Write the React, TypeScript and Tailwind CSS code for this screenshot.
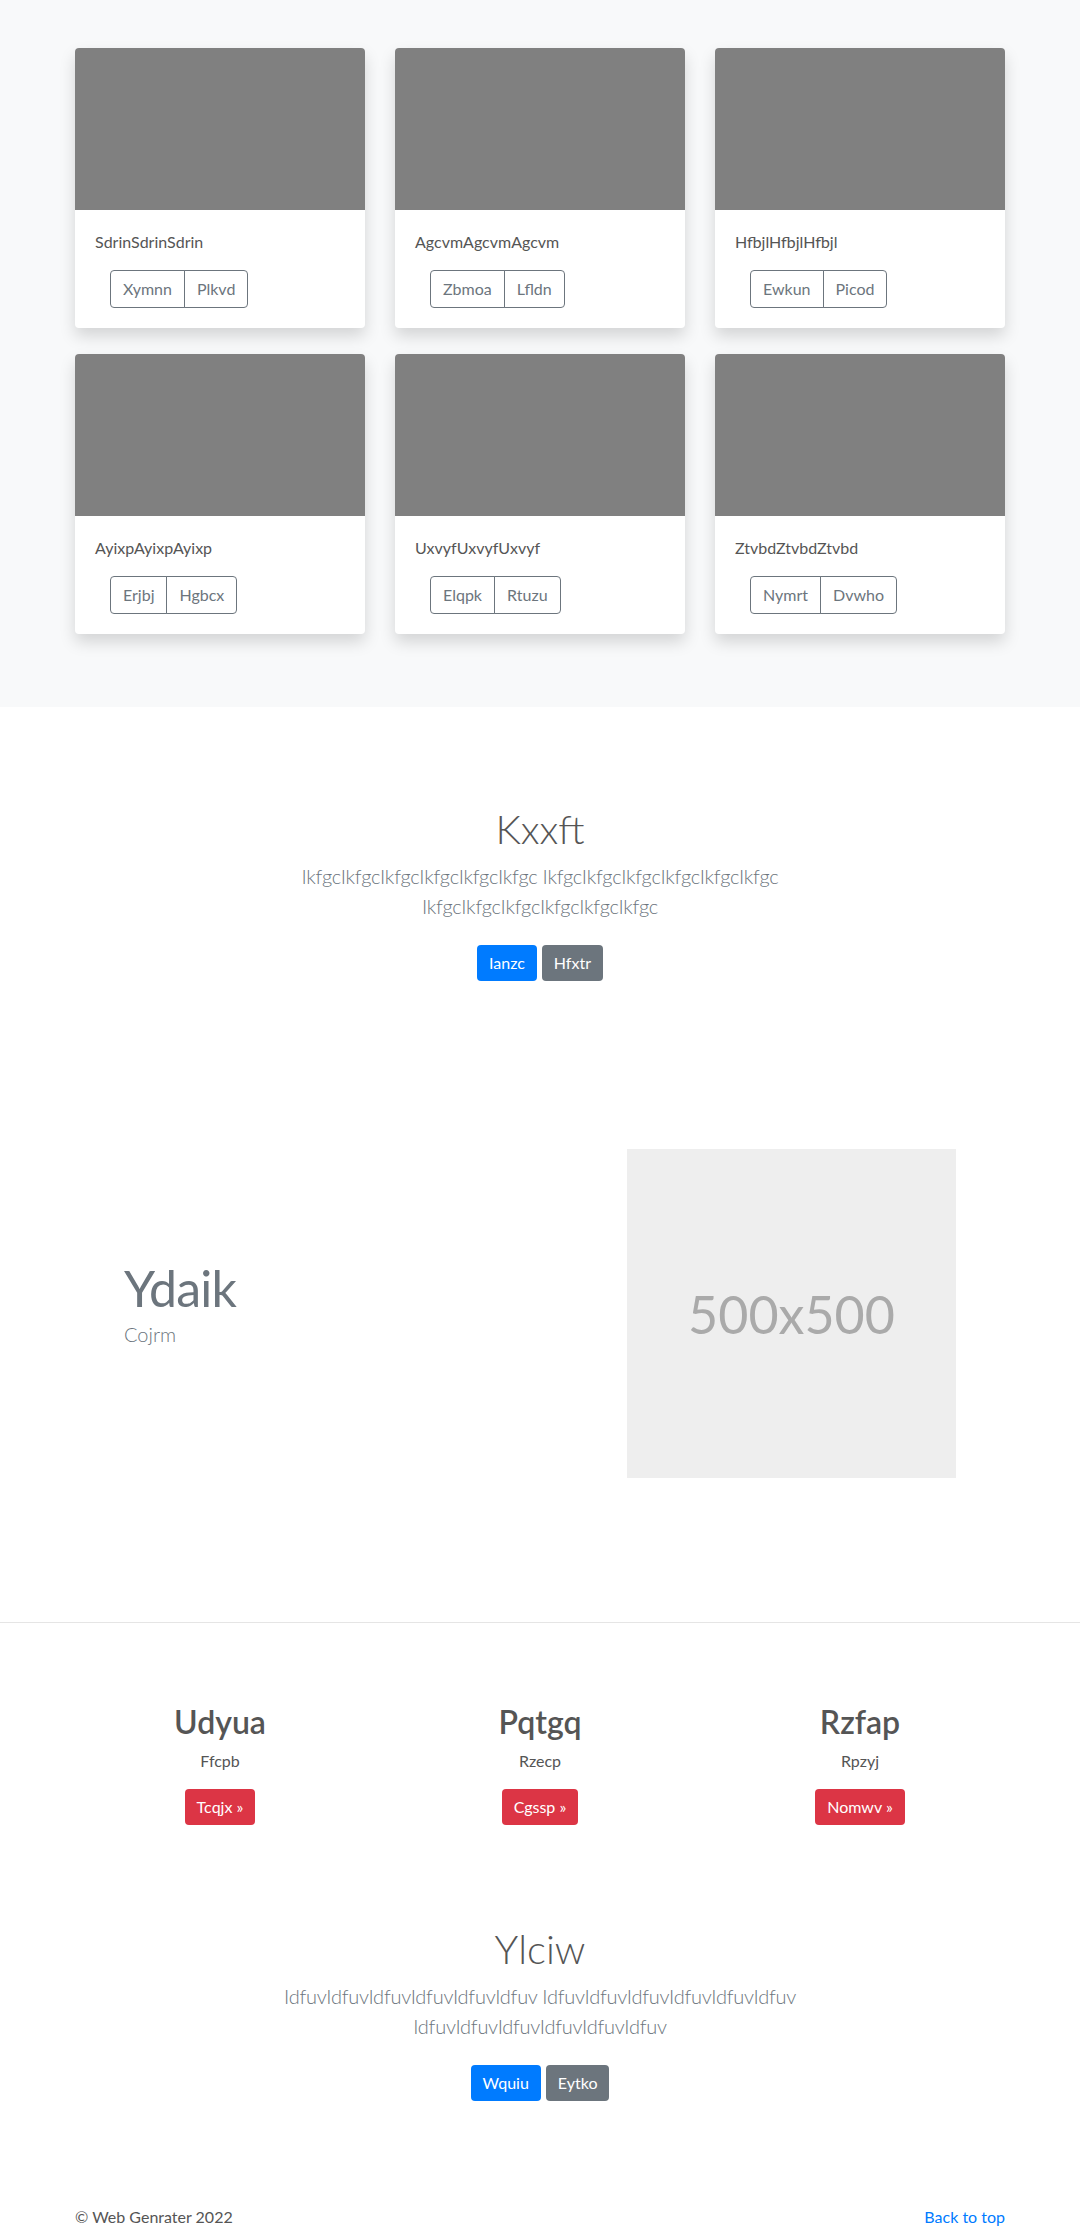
const cards = [
  { title: "SdrinSdrinSdrin", buttons: ["Xymnn", "Plkvd"] },
  { title: "AgcvmAgcvmAgcvm", buttons: ["Zbmoa", "Lfldn"] },
  { title: "HfbjlHfbjlHfbjl", buttons: ["Ewkun", "Picod"] },
  { title: "AyixpAyixpAyixp", buttons: ["Erjbj", "Hgbcx"] },
  { title: "UxvyfUxvyfUxvyf", buttons: ["Elqpk", "Rtuzu"] },
  { title: "ZtvbdZtvbdZtvbd", buttons: ["Nymrt", "Dvwho"] },
];

const columns = [
  { title: "Udyua", text: "Ffcpb", button: "Tcqjx" },
  { title: "Pqtgq", text: "Rzecp", button: "Cgssp" },
  { title: "Rzfap", text: "Rpzyj", button: "Nomwv" },
];

const Jumbotron = ({
  title,
  lead,
  primary,
  secondary,
  top,
}: {
  title: string;
  lead: string;
  primary: string;
  secondary: string;
  top: string;
}) => {
  return (
    <section className={top + " pb-12 text-center"}>
      <h1 className="mb-2 text-[40px] leading-[48px] font-light text-[#555]">
        {title}
      </h1>
      <p className="mx-auto mb-4 max-w-[610px] text-xl leading-[30px] font-light tracking-[-0.25px] text-[#6c757d]">
        {lead}
      </p>
      <div className="mt-6 mb-2 flex justify-center gap-[5px]">
        <a className="rounded bg-[#007bff] px-3 py-1.5 text-base leading-6 text-white">
          {primary}
        </a>
        <a className="rounded bg-[#6c757d] px-3 py-1.5 text-base leading-6 text-white">
          {secondary}
        </a>
      </div>
    </section>
  );
};

const App = () => {
  return (
    <div className="bg-white font-[Lato,'Open_Sans',sans-serif] text-base leading-6 text-[#555]">
      {/* album */}
      <section className="bg-[#f8f9fa] pt-12 pb-[73px]">
        <div className="mx-auto grid w-[930px] grid-cols-3 gap-x-[30px] gap-y-[26px]">
          {cards.map((card) => (
            <div
              key={card.title}
              className="overflow-hidden rounded bg-white shadow-[0_8px_16px_rgba(0,0,0,0.15)]"
            >
              <div className="h-[162px] bg-[#808080]" />
              <div className="p-5">
                <p className="mb-4">{card.title}</p>
                <div className="ml-[15px] flex">
                  {card.buttons.map((label, i) => (
                    <button
                      key={label}
                      className={
                        i === 0
                          ? "rounded-l border border-[#6c757d] px-3 py-1.5 leading-6 text-[#6c757d]"
                          : "-ml-px rounded-r border border-[#6c757d] px-3 py-1.5 leading-6 text-[#6c757d]"
                      }
                    >
                      {label}
                    </button>
                  ))}
                </div>
              </div>
            </div>
          ))}
        </div>
      </section>

      <Jumbotron
        top="pt-[98px]"
        title="Kxxft"
        lead="IkfgcIkfgcIkfgcIkfgcIkfgcIkfgc IkfgcIkfgcIkfgcIkfgcIkfgcIkfgc IkfgcIkfgcIkfgcIkfgcIkfgcIkfgc"
        primary="Ianzc"
        secondary="Hfxtr"
      />

      {/* featurette */}
      <section className="pt-[112px]">
        <div className="mx-auto flex w-[960px] items-center justify-between px-16">
          <div>
            <h2 className="mb-[6px] text-[50px] leading-[50px] font-normal tracking-[-0.05rem] text-[#6c757d]">
              Ydaik
            </h2>
            <p className="mb-4 text-xl leading-[30px] font-light text-[#6c757d]">
              Cojrm
            </p>
          </div>
          <div className="flex h-[329px] w-[329px] items-center justify-center bg-[#eee] text-[52px] text-[#aaa]">
            500x500
          </div>
        </div>
      </section>

      <hr className="mt-[144px] border-0 border-t border-black/10" />

      {/* marketing columns */}
      <section className="mx-auto mt-20 grid w-[960px] grid-cols-3 text-center">
        {columns.map((col) => (
          <div key={col.title}>
            <h2 className="mb-2 text-[32px] leading-[38px] font-semibold text-[#555]">
              {col.title}
            </h2>
            <p className="mb-4">{col.text}</p>
            <a className="inline-block rounded bg-[#dc3545] px-3 py-1.5 leading-6 text-white">
              {col.button} &raquo;
            </a>
          </div>
        ))}
      </section>

      <Jumbotron
        top="pt-[100px]"
        title="Ylciw"
        lead="IdfuvIdfuvIdfuvIdfuvIdfuvIdfuv IdfuvIdfuvIdfuvIdfuvIdfuvIdfuv IdfuvIdfuvIdfuvIdfuvIdfuvIdfuv"
        primary="Wquiu"
        secondary="Eytko"
      />

      <footer className="pt-12 pb-12">
        <div className="mx-auto flex w-[930px] justify-between">
          <p>&copy; Web Genrater 2022</p>
          <a className="text-[#007bff]">Back to top</a>
        </div>
      </footer>
    </div>
  );
};

export default App;
